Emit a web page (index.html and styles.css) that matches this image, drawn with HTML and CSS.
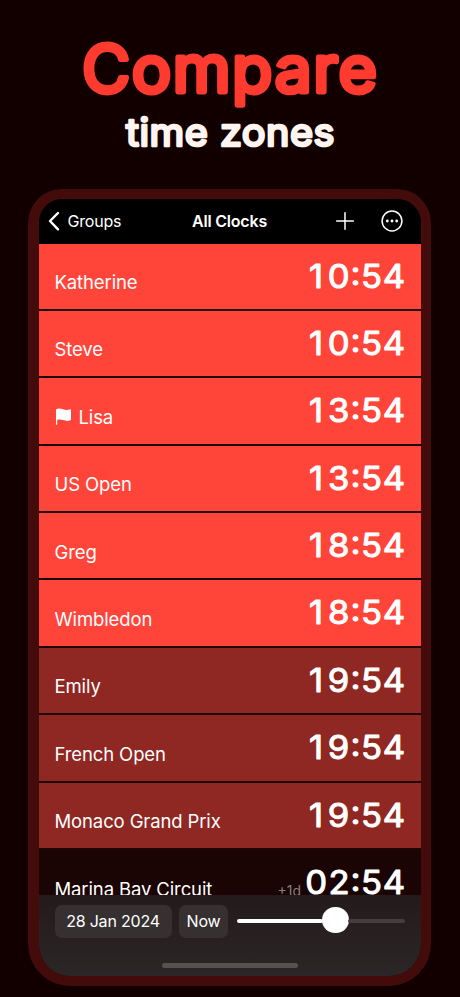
FILE: index.html
```html
<!DOCTYPE html>
<html lang="en">
<head>
<meta charset="utf-8">
<title>Compare time zones</title>
<link rel="stylesheet" href="styles.css">
</head>
<body>
<h1 class="headline">
  <svg width="460" height="189" viewBox="0 0 460 189">
    <text class="headline-main" x="82" y="91.500" textLength="296.500" lengthAdjust="spacingAndGlyphs">Compare</text>
    <text class="headline-sub" x="126" y="146.300" textLength="209" lengthAdjust="spacingAndGlyphs">time zones</text>
  </svg>
</h1>
<main class="phone">
  <header class="nav">
    <div class="back">
      <svg width="12" height="20" viewBox="0 0 12 20"><path d="M10 2 2 10l8 8.300"/></svg>
      <span>Groups</span>
    </div>
    <div class="title">All Clocks</div>
    <div class="actions">
      <svg width="18" height="18" viewBox="0 0 18 18"><path d="M9 .7v16.600M.7 9h16.600"/></svg>
      <svg width="22" height="22" viewBox="0 0 22 22"><circle cx="11" cy="11" r="9.900"/><g class="dots"><circle cx="6.300" cy="11" r="1.400"/><circle cx="11" cy="11" r="1.400"/><circle cx="15.700" cy="11" r="1.400"/></g></svg>
    </div>
  </header>
  <section class="clocks">
    <div class="row day"><span class="name">Katherine</span><svg class="time" viewBox="0 0 99 44" preserveAspectRatio="none"><text y="30 30 27 30 30" x="10.500 32 48 63.300 84.600">10:54</text></svg></div>
    <div class="row day"><span class="name">Steve</span><svg class="time" viewBox="0 0 99 44" preserveAspectRatio="none"><text y="30 30 27 30 30" x="10.500 32 48 63.300 84.600">10:54</text></svg></div>
    <div class="row day"><span class="name"><svg class="flag" width="17" height="17" viewBox="0 0 17 17"><path d="M1 1.500C3-.1 5.500.4 8 1.300c2.700 1 5 .9 7 0 .6-.3 1 0 1 .5v9.500c0 .5-.2.8-.7 1-2.300 1-4.600.7-7.300-.2-2.300-.8-4.200-.8-5.800-.2v4.300c0 .4-.2.6-.6.6s-.6-.2-.6-.6z"/></svg>Lisa</span><svg class="time" viewBox="0 0 99 44" preserveAspectRatio="none"><text y="30 30 27 30 30" x="10.500 32 48 63.300 84.600">13:54</text></svg></div>
    <div class="row day"><span class="name">US Open</span><svg class="time" viewBox="0 0 99 44" preserveAspectRatio="none"><text y="30 30 27 30 30" x="10.500 32 48 63.300 84.600">13:54</text></svg></div>
    <div class="row day"><span class="name">Greg</span><svg class="time" viewBox="0 0 99 44" preserveAspectRatio="none"><text y="30 30 27 30 30" x="10.500 32 48 63.300 84.600">18:54</text></svg></div>
    <div class="row day"><span class="name">Wimbledon</span><svg class="time" viewBox="0 0 99 44" preserveAspectRatio="none"><text y="30 30 27 30 30" x="10.500 32 48 63.300 84.600">18:54</text></svg></div>
    <div class="row dusk"><span class="name">Emily</span><svg class="time" viewBox="0 0 99 44" preserveAspectRatio="none"><text y="30 30 27 30 30" x="10.500 32 48 63.300 84.600">19:54</text></svg></div>
    <div class="row dusk"><span class="name">French Open</span><svg class="time" viewBox="0 0 99 44" preserveAspectRatio="none"><text y="30 30 27 30 30" x="10.500 32 48 63.300 84.600">19:54</text></svg></div>
    <div class="row dusk"><span class="name">Monaco Grand Prix</span><svg class="time" viewBox="0 0 99 44" preserveAspectRatio="none"><text y="30 30 27 30 30" x="10.500 32 48 63.300 84.600">19:54</text></svg></div>
    <div class="row night"><span class="name">Marina Bay Circuit</span><span class="offset">+1d</span><svg class="time" viewBox="0 0 99 44" preserveAspectRatio="none"><text y="30 30 27 30 30" x="10.700 32.500 48 63.300 84.600">02:54</text></svg></div>
  </section>
  <footer class="toolbar">
    <div class="controls">
      <button class="date">28 Jan 2024</button>
      <button class="now">Now</button>
      <div class="slider"><div class="fill"></div><div class="thumb"></div><div class="rest"></div></div>
    </div>
    <div class="home"></div>
  </footer>
</main>
</body>
</html>
```
FILE: styles.css
```css
* { box-sizing: border-box; }
body {
  margin: 0;
  width: 460px;
  height: 997px;
  overflow: hidden;
  background: #120000;
  color: #fff;
  font-family: Inter, "Liberation Sans", sans-serif;
}
svg { display: block; flex: none; overflow: visible; }
.headline { margin: 0; height: 189px; }
.headline text { stroke-linejoin: round; stroke-linecap: round; font-optical-sizing: none; }
.headline-main {
  font-size: 64px;
  font-weight: 400;
  letter-spacing: 1.500px;
  fill: #ff3b30;
  stroke: #ff3b30;
  stroke-width: 4.800px;
}
.headline-sub {
  font-size: 38.500px;
  font-weight: 400;
  letter-spacing: 0.500px;
  fill: #fff5f0;
  stroke: #fff5f0;
  stroke-width: 2.7px;
}
.phone {
  display: flex;
  flex-direction: column;
  width: 403px;
  height: 797px;
  margin-left: 28px;
  border: solid #430c0b;
  border-width: 10.500px 10px 10.500px 11px;
  border-radius: 34px 34px 42px 42px;
  overflow: hidden;
  background: #1a0504;
}
.nav {
  flex: none;
  display: grid;
  grid-template-columns: 1fr auto 1fr;
  align-items: center;
  height: 44.5px;
  padding: 0 18px 0 9px;
  background: #000;
  font-size: 16px;
  letter-spacing: -0.2px;
}
.nav svg { fill: none; stroke: #fff; stroke-width: 1.5; stroke-linecap: round; stroke-linejoin: round; }
.nav .dots { fill: #fff; stroke: none; }
.back { display: flex; align-items: center; gap: 7.500px; }
.nav .back svg { stroke-width: 2.4; }
.title { font-weight: 600; margin-left: 8px; }
.actions { display: flex; justify-content: flex-end; align-items: center; gap: 27px; }
.clocks { flex: none; height: 651px; overflow: hidden; }
.row {
  display: flex;
  align-items: flex-start;
  height: 67.4px;
  padding: 14px 12px 0 15.500px;
  border-bottom: 2px solid #1f0504;
}
.day { background: #ff453a; }
.dusk { background: #8f2722; }
.night { background: #1a0504; }
.name {
  display: flex;
  flex: 1;
  align-items: center;
  gap: 7px;
  padding-top: 12.500px;
  font-size: 18.500px;
  line-height: 24px;
  letter-spacing: -0.12px;
}
.flag { fill: #fff; }
.time { width: 104px; height: 44px; }
.time text {
  font-size: 33px;
  font-weight: 400;
  font-optical-sizing: none;
  text-anchor: middle;
  fill: #fff;
  stroke: #fff;
  stroke-width: 1px;
  stroke-linejoin: round;
}
.offset { padding-top: 17px; margin-right: 4px; font-size: 14px; line-height: 20px; color: #8a7d7c; }
.toolbar {
  flex: 1;
  display: flex;
  flex-direction: column;
  justify-content: space-between;
  align-items: center;
  padding: 10px 16.500px 8px 15.500px;
  background: linear-gradient(#241a1b, #2b2627);
}
.controls { display: flex; align-items: center; width: 100%; }
button {
  height: 33px;
  padding: 0;
  border: 0;
  border-radius: 7px;
  background: #373031;
  color: #fff;
  font: 16px Inter, sans-serif;
  letter-spacing: -0.2px;
}
.date { width: 117px; }
.now { width: 49px; margin: 0 9px 0 7.500px; }
.slider { flex: 1; display: flex; align-items: center; }
.fill { width: 86px; height: 4px; border-radius: 2px; background: #fff; }
.thumb { width: 26.500px; height: 26.500px; margin: -2px -1px 0; border-radius: 50%; background: #fff; }
.rest { flex: 1; height: 4px; border-radius: 2px; background: #473c40; }
.home { width: 136px; height: 5px; margin-left: 1px; border-radius: 3px; background: #545350; }
```
